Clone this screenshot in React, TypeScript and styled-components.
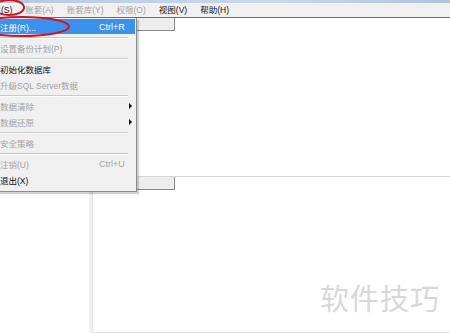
import styled, { createGlobalStyle } from 'styled-components';

const GlobalStyle = createGlobalStyle`
    html, body {
        margin: 0;
        padding: 0;
        background: #ffffff;
        overflow: hidden;
    }
    body {
        font-family: "Liberation Sans", "Noto Sans CJK SC", sans-serif;
    }
`;

type MenuEntry =
    | {kind: 'item'; label: string; shortcut?: string; disabled?: boolean; active?: boolean; sub?: boolean}
    | {kind: 'sep'};

const menuEntries: MenuEntry[] = [
    {kind: 'item', label: '注册(R)...', shortcut: 'Ctrl+R', active: true},
    {kind: 'sep'},
    {kind: 'item', label: '设置备份计划(P)', disabled: true},
    {kind: 'sep'},
    {kind: 'item', label: '初始化数据库'},
    {kind: 'item', label: '升级SQL Server数据', disabled: true},
    {kind: 'sep'},
    {kind: 'item', label: '数据清除', disabled: true, sub: true},
    {kind: 'item', label: '数据还原', disabled: true, sub: true},
    {kind: 'sep'},
    {kind: 'item', label: '安全策略', disabled: true},
    {kind: 'sep'},
    {kind: 'item', label: '注销(U)', shortcut: 'Ctrl+U', disabled: true},
    {kind: 'item', label: '退出(X)'},
];

const topMenus = [
    {label: '(S)', disabled: false},
    {label: '账套(A)', disabled: true},
    {label: '账套库(Y)', disabled: true},
    {label: '权限(O)', disabled: true},
    {label: '视图(V)', disabled: false},
    {label: '帮助(H)', disabled: false},
];

const App = () => {
    return (
        <Screen>
            <GlobalStyle />
            <TitleStrip />
            <MenuBar>
                {topMenus.map((m) => (
                    <TopMenu key={m.label} $disabled={m.disabled}>
                        {m.label}
                    </TopMenu>
                ))}
            </MenuBar>
            <Workspace>
                <Pane $height={158}>
                    <PaneHeader>
                        <PaneTab />
                    </PaneHeader>
                </Pane>
                <Pane $grow>
                    <PaneHeader $ruled>
                        <PaneTab />
                    </PaneHeader>
                    <PaneBody>
                        <LeftColumn />
                        <Splitter />
                        <RightColumn />
                    </PaneBody>
                </Pane>
            </Workspace>

            <DropMenu>
                {menuEntries.map((e, i) =>
                    e.kind === 'sep' ? (
                        <Separator key={i} />
                    ) : (
                        <MenuItem key={i} $active={e.active} $disabled={e.disabled}>
                            <span>{e.label}</span>
                            {e.shortcut && <Shortcut>{e.shortcut}</Shortcut>}
                            {e.sub && <SubArrow />}
                        </MenuItem>
                    )
                )}
            </DropMenu>

            <Marks width="450" height="333" viewBox="0 0 450 333">
                <ellipse cx="9" cy="7.5" rx="15" ry="7.5" fill="none" stroke="#cf1326" strokeWidth="2" />
                <ellipse cx="22" cy="26.5" rx="47" ry="9.5" fill="none" stroke="#cf1326" strokeWidth="2" />
            </Marks>

            <Watermark>软件技巧</Watermark>
        </Screen>
    );
};

const Screen = styled.div`
    position: relative;
    width: 450px;
    height: 333px;
    overflow: hidden;
    background: #ffffff;
    display: flex;
    flex-direction: column;
`;

const TitleStrip = styled.div`
    height: 3px;
    background: linear-gradient(90deg, #b4c9e2, #c9d9ec 60%, #aec4de);
`;

const MenuBar = styled.div`
    height: 14px;
    padding-left: 1px;
    background: #f0f0f0;
    border-bottom: 1px solid #6e6e6e;
    display: flex;
    align-items: center;
    gap: 13px;
`;

const TopMenu = styled.span<{$disabled?: boolean}>`
    font-size: 8.5px;
    line-height: 14px;
    color: ${(p) => (p.$disabled ? '#a3a3a3' : '#151515')};
    white-space: nowrap;
`;

const Workspace = styled.div`
    flex: 1;
    display: flex;
    flex-direction: column;
`;

const Pane = styled.div<{$height?: number; $grow?: boolean}>`
    display: flex;
    flex-direction: column;
    ${(p) => (p.$grow ? 'flex: 1;' : `height: ${p.$height}px;`)}
`;

const PaneHeader = styled.div<{$ruled?: boolean}>`
    height: 13px;
    display: flex;
    ${(p) => (p.$ruled ? 'border-top: 1px solid #d6d6d6;' : '')}
`;

const PaneTab = styled.div`
    width: 175px;
    background: #ededed;
    border-right: 1px solid #8a8a8a;
    border-bottom: 1px solid #8a8a8a;
    box-sizing: border-box;
`;

const PaneBody = styled.div`
    flex: 1;
    display: flex;
`;

const LeftColumn = styled.div`
    width: 89px;
`;

const Splitter = styled.div`
    width: 4px;
    background: #f0f0f0;
    border-right: 1px solid #e6e6e6;
    box-sizing: border-box;
`;

const RightColumn = styled.div`
    flex: 1;
    border-bottom: 1px solid #e4e4e4;
`;

const DropMenu = styled.div`
    position: absolute;
    left: -20px;
    top: 18px;
    width: 157px;
    box-sizing: border-box;
    padding: 1px 1px 3px 2px;
    background: #f0f0f0;
    border-right: 1px solid #8d8d8d;
    border-bottom: 1px solid #8d8d8d;
    box-shadow: 2px 2px 1px rgba(0, 0, 0, 0.18);
    display: flex;
    flex-direction: column;
`;

const MenuItem = styled.div<{$active?: boolean; $disabled?: boolean}>`
    position: relative;
    height: 15px;
    margin: ${(p) => (p.$active ? '0 0 1px 0' : '0')};
    padding: ${(p) => (p.$active ? '0' : '0 0 1px 0')};
    padding-left: 18px;
    display: flex;
    align-items: center;
    font-size: 8.5px;
    color: ${(p) => (p.$active ? '#ffffff' : p.$disabled ? '#a4a4a4' : '#111111')};
    background: ${(p) => (p.$active ? '#3a92ee' : 'transparent')};
    white-space: nowrap;
`;

const Shortcut = styled.span`
    position: absolute;
    left: 117px;
    font-size: 9px;
`;

const SubArrow = styled.span`
    position: absolute;
    left: 147px;
    width: 0;
    height: 0;
    border-top: 3px solid transparent;
    border-bottom: 3px solid transparent;
    border-left: 3px solid #111111;
`;

const Separator = styled.div`
    height: 5px;
    display: flex;
    align-items: center;
    padding-left: 16px;
    padding-right: 7px;

    &::before {
        content: '';
        flex: 1;
        height: 1px;
        background: #c9c9c9;
        box-shadow: 0 1px 0 #ffffff;
    }
`;

const Marks = styled.svg`
    position: absolute;
    left: 0;
    top: 0;
    pointer-events: none;
`;

const Watermark = styled.div`
    position: absolute;
    left: 320px;
    top: 280px;
    font-size: 29px;
    letter-spacing: 1px;
    color: #d8d8d8;
    font-family: "Noto Sans CJK SC", sans-serif;
    line-height: 34px;
`;

export default App;
